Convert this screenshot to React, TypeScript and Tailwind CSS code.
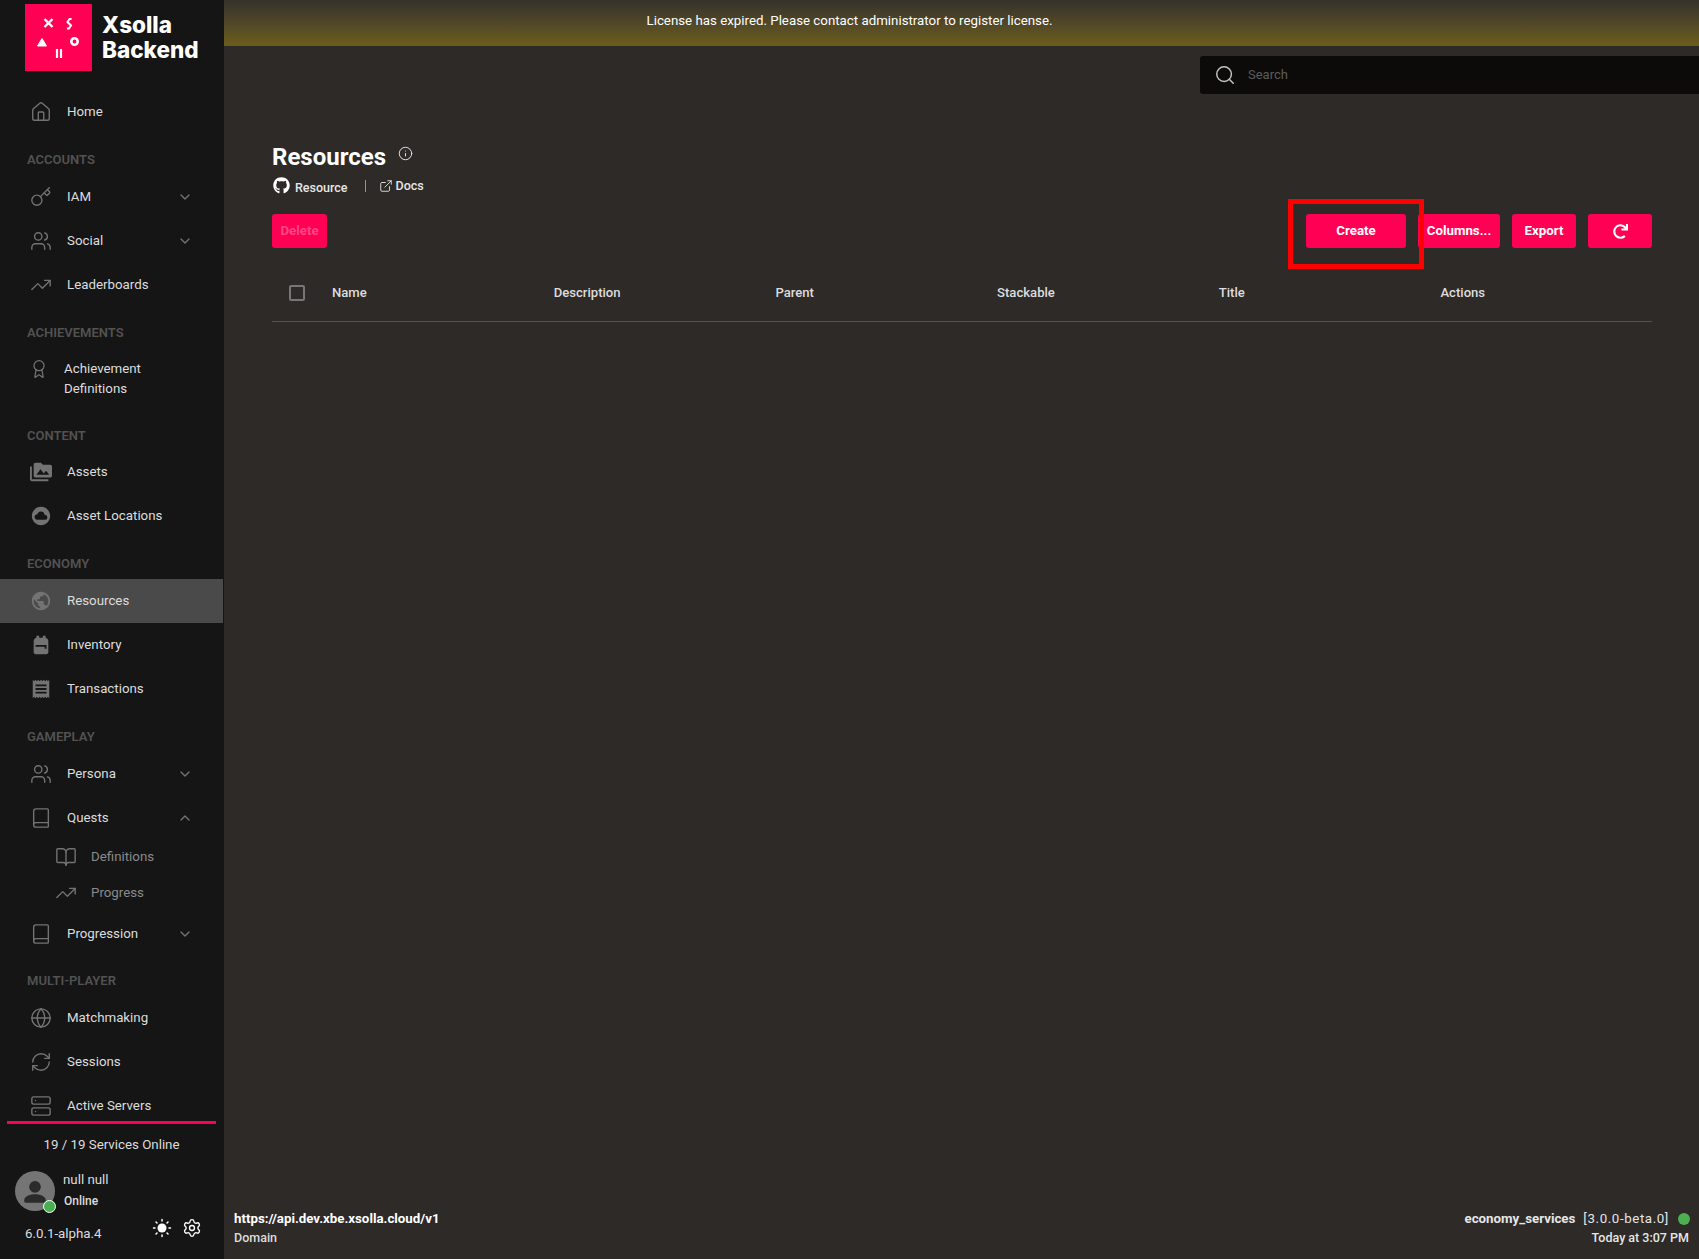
import type { ReactNode } from "react";
import {
  Award,
  Book,
  BookOpen,
  ChevronDown,
  ChevronUp,
  ExternalLink,
  Globe,
  House,
  Info,
  Key,
  RefreshCw,
  Search,
  Server,
  Settings,
  TrendingUp,
  Users,
} from "lucide-react";
import { FaGithub, FaRedo } from "react-icons/fa";
import { MdBackpack, MdCloudCircle, MdPermMedia, MdPublic, MdReceipt } from "react-icons/md";

function Label({ text, className }: { text: string; className: string }) {
  return (
    <div className={`flex shrink-0 items-end pl-[27px] text-[13px] leading-5 font-semibold text-[#525252] ${className}`}>
      {text}
    </div>
  );
}

function Item({
  icon,
  text,
  chevron,
  active,
}: {
  icon: ReactNode;
  text: string;
  chevron?: "down" | "up";
  active?: boolean;
}) {
  return (
    <div className={`flex h-11 shrink-0 items-center ${active ? "w-[223px] bg-[#4a4a4a]" : ""}`}>
      <div className="flex w-[67px] shrink-0 justify-center pl-[15px] text-[#737373]">{icon}</div>
      <div className="flex-1 text-[13.300px] text-[#dddddd]">{text}</div>
      {chevron === "down" && <ChevronDown size={16} className="mr-[31px] text-[#737373]" />}
      {chevron === "up" && <ChevronUp size={16} className="mr-[31px] text-[#737373]" />}
    </div>
  );
}

function SubItem({ icon, text }: { icon: ReactNode; text: string }) {
  return (
    <div className="flex h-9 shrink-0 items-center">
      <div className="flex w-[91px] shrink-0 justify-center pl-[40px] text-[#737373]">{icon}</div>
      <div className="text-[13.300px] text-[#8a8a8a]">{text}</div>
    </div>
  );
}

function Logo() {
  return (
    <div className="h-[67px] w-[67px] shrink-0 bg-[#ff0055]">
      <svg viewBox="0 0 67 67" width="67" height="67" fill="none" stroke="white">
        <path d="M19.500 15l8 8M27.500 15l-8 8" strokeWidth="2.400" />
        <path d="M46.500 15H44.500L42.500 18L46 21.500L44 24.500H42" strokeWidth="2" />
        <path d="M12.500 42l4.500-7.500 4.500 7.500z" fill="white" strokeWidth="1" />
        <circle cx="49.500" cy="37.500" r="3.200" strokeWidth="2.600" />
        <path d="M32 45v9M36 45v9" strokeWidth="2.200" />
      </svg>
    </div>
  );
}

function Sidebar() {
  return (
    <div className="flex h-screen w-[224px] shrink-0 flex-col bg-[#151515]">
      <div className="flex h-[90px] shrink-0 items-start pt-1 pl-[25px]">
        <Logo />
        <div className="mt-[8px] ml-[10px] font-[Inter,sans-serif] text-[22.500px] leading-[25px] font-extrabold text-white">
          Xsolla
          <br />
          Backend
        </div>
      </div>
      <div className="flex min-h-0 flex-1 flex-col overflow-hidden">
        <Item icon={<House size={22} strokeWidth={1.5} />} text="Home" />
        <Label text="ACCOUNTS" className="h-[41px] pb-[5px]" />
        <Item icon={<Key size={22} strokeWidth={1.5} />} text="IAM" chevron="down" />
        <Item icon={<Users size={22} strokeWidth={1.5} />} text="Social" chevron="down" />
        <Item icon={<TrendingUp size={22} strokeWidth={1.5} />} text="Leaderboards" />
        <Label text="ACHIEVEMENTS" className="h-[41px] pb-[5px]" />
        <div className="flex h-[62px] shrink-0 items-start pt-[11px]">
          <div className="flex w-[64px] shrink-0 justify-center pl-[14px] text-[#737373]">
            <Award size={20} strokeWidth={1.5} />
          </div>
          <div className="text-[13.300px] leading-5 text-[#dddddd]">
            Achievement
            <br />
            Definitions
          </div>
        </div>
        <Label text="CONTENT" className="h-[40px] pb-[4px]" />
        <Item icon={<MdPermMedia size={22} />} text="Assets" />
        <Item icon={<MdCloudCircle size={22} />} text="Asset Locations" />
        <Label text="ECONOMY" className="h-[41px] pb-[5px]" />
        <Item icon={<MdPublic size={22} />} text="Resources" active />
        <Item icon={<MdBackpack size={22} />} text="Inventory" />
        <Item icon={<MdReceipt size={22} />} text="Transactions" />
        <Label text="GAMEPLAY" className="h-[41px] pb-[5px]" />
        <Item icon={<Users size={22} strokeWidth={1.5} />} text="Persona" chevron="down" />
        <Item icon={<Book size={22} strokeWidth={1.5} />} text="Quests" chevron="up" />
        <div className="-mt-px shrink-0">
          <SubItem icon={<BookOpen size={22} strokeWidth={1.5} />} text="Definitions" />
          <SubItem icon={<TrendingUp size={22} strokeWidth={1.5} />} text="Progress" />
        </div>
        <div className="h-px shrink-0" />
        <Item icon={<Book size={22} strokeWidth={1.5} />} text="Progression" chevron="down" />
        <Label text="MULTI-PLAYER" className="h-[40px] pb-[5px]" />
        <Item icon={<Globe size={22} strokeWidth={1.5} />} text="Matchmaking" />
        <Item icon={<RefreshCw size={22} strokeWidth={1.5} />} text="Sessions" />
        <Item icon={<Server size={22} strokeWidth={1.5} />} text="Active Servers" />
      </div>
      <div className="mr-[8px] ml-[7px] h-[138px] shrink-0 border-t-[3px] border-[#ff0055]">
        <div className="mt-[11px] text-center text-[13.300px] leading-5 text-[#dddddd]">19 / 19 Services Online</div>
        <div className="mt-[16px] flex pl-2">
          <div className="relative h-10 w-10 shrink-0 rounded-full bg-[#757575]">
            <svg viewBox="0 0 24 24" className="h-10 w-10" fill="#2b2b2b">
              <circle cx="12" cy="9.500" r="3.500" />
              <path d="M5.500 17.500c0-2.500 4-3.500 6.500-3.500s6.500 1 6.500 3.500v.5a1 1 0 0 1-1 1h-11a1 1 0 0 1-1-1z" />
            </svg>
            <div className="absolute top-[29px] left-[28px] h-[13px] w-[13px] rounded-full border-[1.500px] border-white bg-[#4caf50]" />
          </div>
          <div className="-mt-px ml-2">
            <div className="text-[13.300px] leading-5 text-[#dddddd]">null null</div>
            <div className="mt-px ml-px text-xs leading-5 font-medium text-[#dddddd]">Online</div>
          </div>
        </div>
        <div className="mt-[8px] flex items-center pl-[18px]">
          <div className="mt-[5px] flex-1 text-[13.300px] leading-5 text-[#dddddd]">6.0.1-alpha.4</div>
          <svg viewBox="0 0 20 20" className="mr-[10px] -mt-[7px] h-[20px] w-[20px]" stroke="white" strokeWidth="1.500" strokeLinecap="round">
            <circle cx="10" cy="10" r="4.500" fill="white" stroke="none" />
            <path d="M10 1.500v1.500M10 17v1.500M1.500 10H3M17 10h1.500M4 4l1 1M15 15l1 1M4 16l1-1M15 5l1-1" />
          </svg>
          <Settings size={20} strokeWidth={1.6} className="mr-[14px] -mt-[7px] text-white" />
        </div>
      </div>
    </div>
  );
}

function PinkButton({ children, className }: { children: ReactNode; className: string }) {
  return (
    <div className={`flex h-[34px] items-center justify-center rounded-[3px] bg-[#ff0055] text-[13.300px] font-bold text-white ${className}`}>
      {children}
    </div>
  );
}

export default function App() {
  return (
    <div className="flex h-screen w-full overflow-hidden bg-[#2d2a28] font-[Roboto,sans-serif]">
      <Sidebar />
      <div className="relative flex min-w-0 flex-1 flex-col">
        <div className="relative flex h-[46px] shrink-0 items-center bg-gradient-to-b from-[#35322b] to-[#6d5d19] pb-[5px]">
          <div className="w-full pr-[224px] text-center text-[13.300px] leading-5 text-white">
            License has expired. Please contact administrator to register license.
          </div>
        </div>
        <div className="mt-[10px] ml-[976px] flex h-[38px] shrink-0 items-center rounded-l-[3px] bg-[#0c0b09] pl-[14px]">
          <Search size={22} strokeWidth={1.6} className="text-[#c4c4c4]" />
          <div className="ml-[12px] text-[13px] text-[#5c5c5c]">Search</div>
        </div>
        <div className="flex min-h-0 flex-1 flex-col pr-[47px] pl-[48px]">
          <div className="mt-[47px] flex items-start">
            <div className="text-2xl leading-8 font-bold text-white">Resources</div>
            <Info size={15} strokeWidth={1.6} className="mt-[5px] ml-[12px] text-[#e0e0e0]" />
          </div>
          <div className="mt-[2px] flex h-[22px] items-center text-[12.500px] font-medium text-[#e6e6e6]">
            <FaGithub size={17} className="-mt-[2px] ml-px text-white" />
            <span className="mt-[4px] ml-[5px]">Resource</span>
            <div className="mr-[13px] ml-[17px] h-[12px] w-px bg-[#ff5c8f]" />
            <ExternalLink size={14} strokeWidth={1.6} className="text-[#e0e0e0]" />
            <span className="ml-[3px]">Docs</span>
          </div>
          <div className="mt-[17px] flex gap-3">
            <PinkButton className="w-[55px] !text-[#ff4783]">Delete</PinkButton>
            <div className="flex-1" />
            <PinkButton className="w-[100px]">Create</PinkButton>
            <PinkButton className="w-[82px]">Columns...</PinkButton>
            <PinkButton className="w-[64px]">Export</PinkButton>
            <PinkButton className="w-[64px]">
              <FaRedo size={15} />
            </PinkButton>
          </div>
          <div className="mt-[16px] grid h-[58px] grid-cols-[50px_repeat(6,221.700px)] items-center border-b border-[#565452] text-[13.100px] font-medium text-[#dddddd]">
            <div className="ml-[17px] h-4 w-4 rounded-[2px] border-2 border-[#777777]" />
            {["Name", "Description", "Parent", "Stackable", "Title", "Actions"].map((c) => (
              <div key={c} className="pl-[10px]">
                {c}
              </div>
            ))}
          </div>
        </div>
        <div className="flex h-[59px] shrink-0 items-start justify-between px-[10px] pt-[9px]">
          <div>
            <div className="text-[13.300px] leading-[19px] font-bold text-white">https://api.dev.xbe.xsolla.cloud/v1</div>
            <div className="text-[12.500px] leading-5 font-medium text-[#dddddd]">Domain</div>
          </div>
          <div className="flex flex-col items-end">
            <div className="-mr-px flex items-center text-[13.300px] leading-[19px] text-[#e6e6e6]">
              <span className="font-bold">economy_services</span>
              <span className="ml-[8px] tracking-[0.6px]">[3.0.0-beta.0]</span>
              <span className="ml-[9px] h-[12px] w-[12px] rounded-full bg-[#4caf50]" />
            </div>
            <div className="text-[12.500px] leading-5 font-medium text-[#e6e6e6]">Today at 3:07 PM</div>
          </div>
        </div>
        <div className="absolute top-[199px] left-[1064px] h-[70px] w-[136px] border-[5px] border-[#ff0000]" />
      </div>
    </div>
  );
}
